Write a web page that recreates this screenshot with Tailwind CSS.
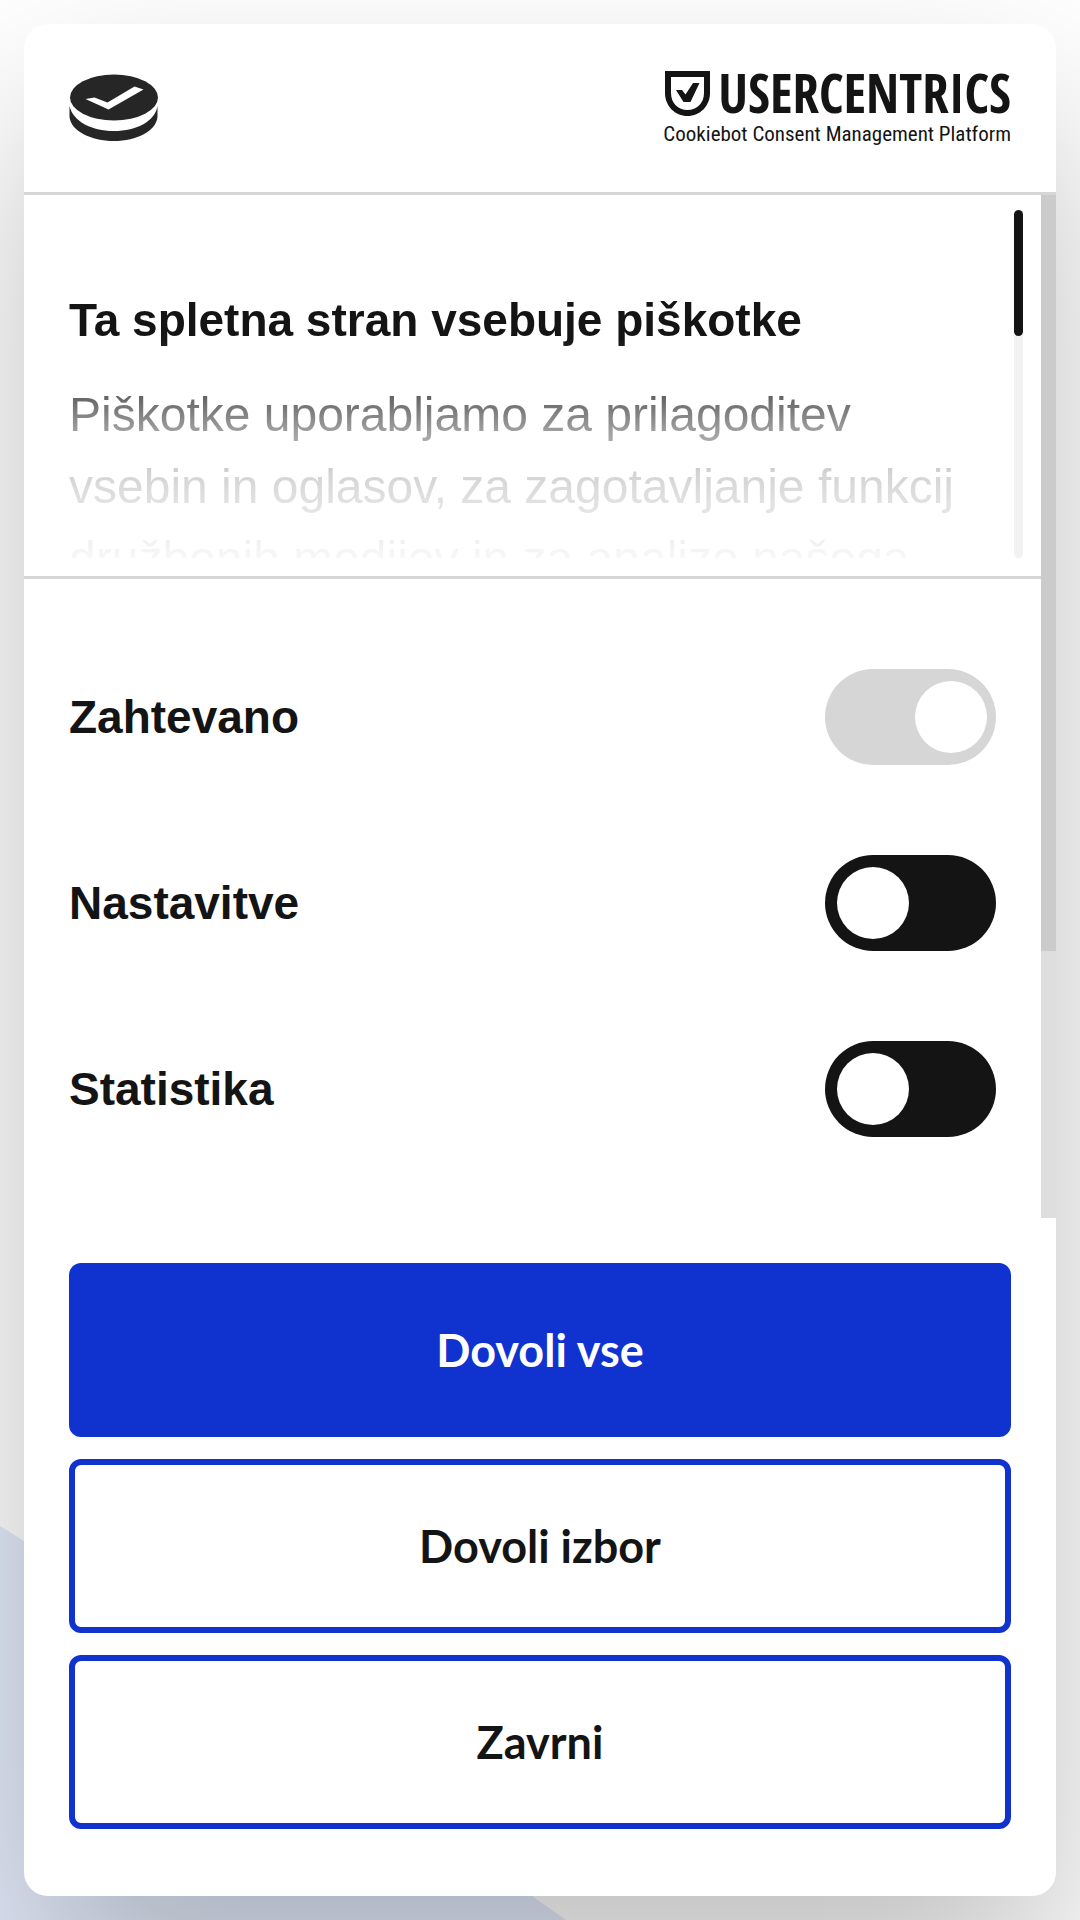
<!DOCTYPE html>
<html lang="sl">
<head>
  <meta charset="UTF-8" />
  <meta name="viewport" content="width=device-width, initial-scale=1" />
  <title>Ta spletna stran vsebuje piškotke</title>
  <script src="https://cdn.jsdelivr.net/npm/@tailwindcss/browser@4"></script>
</head>
<body class="relative isolate min-h-screen overflow-hidden bg-white p-6 font-['Liberation_Sans',Arial,sans-serif] text-[#141414]">

  <!-- Page backdrop -->
  <svg class="absolute bottom-0 left-0 -z-10" width="566" height="394" viewBox="0 0 566 394" aria-hidden="true">
    <path d="M0 0 L24 15 L532 370 L566 394 H0 Z" fill="#e4ebfb" />
  </svg>

  <!-- Consent dialog -->
  <div role="dialog" aria-labelledby="dialog-title" class="flex min-h-[calc(100vh-48px)] flex-col overflow-hidden rounded-3xl bg-white shadow-[0_96px_192px_rgba(0,0,0,0.25)]">

    <!-- Header -->
    <header class="flex items-center justify-between border-b-3 border-[#d6d6d6] px-[45px] py-[46px]">
      <svg class="h-[68px] w-[90px]" viewBox="0 0 90 68" role="img" aria-label="Logo">
        <path d="M0.5 32 C4 47 22 57 45 57 C68 57 86 47 88.5 32 V43 C87 57 68 67 45 67 C22 67 2 57 0.5 43 Z" fill="#262626" />
        <ellipse cx="45" cy="23.5" rx="44" ry="23" fill="#262626" />
        <path d="M16.5 25 L25.5 23.5 L38.5 28.5 L65.5 12.5 L74.5 15.5 L39.5 35.5 Z" fill="#fff" />
      </svg>

      <a href="#" aria-label="Usercentrics Cookiebot" class="flex flex-col items-end gap-1.5">
        <span class="flex items-center gap-2">
          <svg class="h-[45px] w-[45px]" viewBox="0 0 45 45" aria-hidden="true">
            <path fill-rule="evenodd" d="M0 0 H45 V22 C45 35 35 45 22.5 45 C10 45 0 35 0 22 Z M6 6 V22 C6 32 13 39 22.5 39 C32 39 39 32 39 22 V6 Z" fill="#141414" />
            <path d="M11 19 H17 L20.5 23.5 L28 12 H34.5 L25.5 31 H18.5 Z" fill="#141414" />
          </svg>
          <span class="font-['Open_Sans_Condensed','Roboto_Condensed',sans-serif] text-[53px] leading-[46px] font-extrabold">USERCENTRICS</span>
        </span>
        <span class="font-['Roboto_Condensed',Roboto,sans-serif] text-[21px] leading-6">Cookiebot Consent Management Platform</span>
      </a>
    </header>

    <!-- Scrollable body -->
    <main class="flex flex-1">
      <div class="flex min-w-0 flex-1 flex-col">

        <section class="flex gap-2 border-b-3 border-[#d6d6d6] pt-[15px] pr-[18px] pb-[18px] pl-[45px]">
          <div class="h-[348px] min-w-0 flex-1 overflow-hidden pt-[83px] mask-[linear-gradient(to_bottom,black_37%,rgba(0,0,0,0.65)_54%,rgba(0,0,0,0.42)_63%,rgba(0,0,0,0.18)_76%,rgba(0,0,0,0.12)_85%,rgba(0,0,0,0.03)_100%)]">
            <h2 id="dialog-title" class="text-[46px] leading-[54px] font-bold">Ta spletna stran vsebuje piškotke</h2>
            <p class="mt-8 text-5xl leading-[72px]">
              Piškotke uporabljamo za prilagoditev<br />
              vsebin in oglasov, za zagotavljanje funkcij<br />
              družbenih medijev in za analize našega
            </p>
          </div>
          <div class="w-[9px] rounded-full bg-[#f2f2f2]">
            <div class="h-[126px] rounded-full bg-[#141414]"></div>
          </div>
        </section>

        <section class="flex flex-col gap-[90px] px-[45px] pt-[90px] pb-[81px] text-[46px] leading-[54px] font-bold">
          <div class="flex items-center justify-between">
            <label for="necessary">Zahtevano</label>
            <input id="necessary" type="checkbox" role="switch" checked disabled class="flex h-24 w-[171px] appearance-none items-center justify-end rounded-full bg-[#d6d6d6] px-[9px] before:size-[72px] before:rounded-full before:bg-white before:content-['']" />
          </div>
          <div class="flex items-center justify-between">
            <label for="preferences">Nastavitve</label>
            <input id="preferences" type="checkbox" role="switch" class="flex h-24 w-[171px] appearance-none items-center rounded-full bg-[#141414] px-3 before:size-[72px] before:rounded-full before:bg-white before:content-[''] checked:justify-end checked:bg-[#1032cf]" />
          </div>
          <div class="flex items-center justify-between">
            <label for="statistics">Statistika</label>
            <input id="statistics" type="checkbox" role="switch" class="flex h-24 w-[171px] appearance-none items-center rounded-full bg-[#141414] px-3 before:size-[72px] before:rounded-full before:bg-white before:content-[''] checked:justify-end checked:bg-[#1032cf]" />
          </div>
        </section>
      </div>

      <!-- Scroll track -->
      <div class="w-[15px] bg-[#dedede]">
        <div class="h-[756px] bg-[#cbcbcb]"></div>
      </div>
    </main>

    <!-- Actions -->
    <footer class="flex flex-col gap-[22px] px-[45px] pt-[45px] pb-[67px] font-[Lato,sans-serif] text-[45px] leading-[54px] font-bold">
      <button type="button" class="rounded-xl border-6 border-[#1032cf] bg-[#1032cf] py-[54px] text-white">Dovoli vse</button>
      <button type="button" class="rounded-xl border-6 border-[#1032cf] py-[54px]">Dovoli izbor</button>
      <button type="button" class="rounded-xl border-6 border-[#1032cf] py-[54px]">Zavrni</button>
    </footer>
  </div>

</body>
</html>
